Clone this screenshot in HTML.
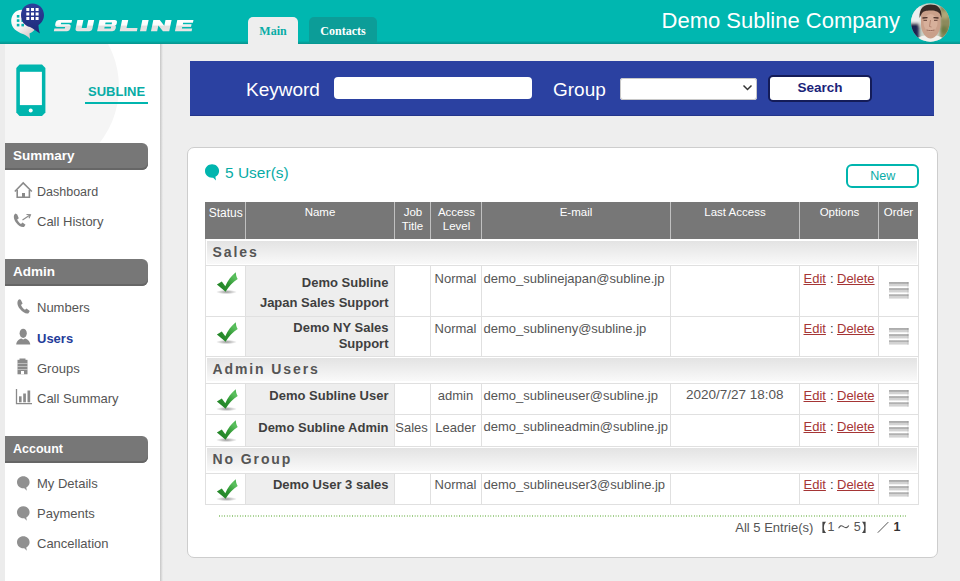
<!DOCTYPE html>
<html><head><meta charset="utf-8"><style>
html,body{margin:0;padding:0;width:960px;height:581px;overflow:hidden;background:#eeeeee;}
body{position:relative;font-family:"Liberation Sans", sans-serif;}
.b{position:absolute;}
.t{position:absolute;white-space:nowrap;}
</style></head><body>
<div class="b" style="left:0px;top:0px;width:960px;height:581px;background:#eeeeee;"></div>
<div class="b" style="left:0px;top:0px;width:960px;height:44px;background:linear-gradient(#00b7b0 0,#00b7b0 41px,#04a6a0 42px,#07948e 44px);"></div>
<svg class="b" style="left:8px;top:0px;" width="42" height="44" viewBox="0 0 42 44">
<defs>
<linearGradient id="wb" x1="0" y1="0" x2="0.6" y2="1"><stop offset="0" stop-color="#ffffff"/><stop offset="0.6" stop-color="#f4f4f4"/><stop offset="1" stop-color="#d9c9c9"/></linearGradient>
<linearGradient id="bb" x1="0" y1="0" x2="0" y2="1"><stop offset="0" stop-color="#2d3f9c"/><stop offset="1" stop-color="#1e2a78"/></linearGradient>
</defs>
<path d="M14 9.8 C7 9.8 3.2 15.5 3.2 21 C3.2 28 9 32 15 34 C18 35 20.5 37 22 39 L21.5 33.5 C25 32 27 30 28 27 Z" fill="url(#wb)"/>
<g fill="#00b5ae"><rect x="8.8" y="15" width="2.6" height="2.6"/><rect x="8.8" y="19.3" width="2.6" height="2.6"/><rect x="8.8" y="23.8" width="2.6" height="2.6"/><rect x="13.4" y="23.8" width="2.6" height="2.6"/><rect x="13.4" y="19.3" width="2.6" height="2.6"/></g>
<path d="M24.5 3.5 C31 3.5 36 8.5 36 15 C36 19.5 33.5 23 30.5 25 C30.5 28 31 31 32 33.5 C28.5 31.5 25 28.5 22 27 C16.5 26 13 21 13 15 C13 8.5 18 3.5 24.5 3.5 Z" fill="url(#bb)"/>
<g fill="#ffffff"><rect x="18.3" y="8" width="3" height="3"/><rect x="23" y="8" width="3" height="3"/><rect x="27.6" y="8" width="3" height="3"/>
<rect x="18.3" y="12.5" width="3" height="3"/><rect x="23" y="12.5" width="3" height="3"/><rect x="27.6" y="12.5" width="3" height="3"/>
<rect x="18.3" y="17" width="3" height="3"/><rect x="23" y="17" width="3" height="3"/><rect x="27.6" y="17" width="3" height="3"/></g>
</svg>
<svg class="b" style="left:50px;top:20.3px;overflow:visible;" width="150" height="11.2" viewBox="0 0 150 11.2"><defs><linearGradient id="lg" x1="0" y1="0" x2="0" y2="1"><stop offset="0" stop-color="#ffffff"/><stop offset="0.45" stop-color="#fbfbfb"/><stop offset="0.55" stop-color="#e0e0e0"/><stop offset="0.9" stop-color="#e6e3e3"/><stop offset="1" stop-color="#f5e4e4"/></linearGradient></defs>
<g fill="url(#lg)" fill-rule="evenodd" transform="matrix(1 0 -0.21 1 2.35 0)"><path transform="translate(3.75 0)" d="M15.9 0 H2.6 Q0 0 0 2.6 V4.35 Q0 6.95 2.6 6.95 H10.4 V8.5 H0 V11.2 H13.3 Q15.9 11.2 15.9 8.6 V6.85 Q15.9 4.25 13.3 4.25 H5.5 V2.7 H15.9 Z"/><path transform="translate(25.00 0)" d="M0 0 H6 V8.1 H10.9 V0 H16.8 V8.4 Q16.8 11.2 14 11.2 H2.8 Q0 11.2 0 8.4 Z"/><path transform="translate(47.10 0)" d="M0 0 H15.2 Q18 0 18 2.6 V3.7 Q18 5.6 16.4 5.6 Q18 5.6 18 7.5 V8.6 Q18 11.2 15.2 11.2 H0 Z M6.6 2.5 V4.3 H13.1 V2.5 Z M6.6 6.7 V8.6 H13.1 V6.7 Z"/><path transform="translate(69.70 0)" d="M0 0 H6.2 V8.1 H17.2 V11.2 H0 Z"/><path transform="translate(90.00 0)" d="M0 0 H6.3 V11.2 H0 Z"/><path transform="translate(101.00 0)" d="M0 11.2 V0 H6.4 L12.2 5.8 V0 H18.3 V11.2 H12 L6.2 5.4 V11.2 Z"/><path transform="translate(125.00 0)" d="M0 0 H16.2 V2.8 H6.4 V4.2 H15.2 V7.1 H6.4 V8.5 H16.7 V11.2 H0 Z"/></g></svg>
<div class="b" style="left:248px;top:17px;width:50px;height:27px;background:#eeeeee;border-radius:5px 5px 0 0;"></div>
<div class="b" style="left:309px;top:17px;width:68px;height:26px;background:#0c9d98;border-radius:5px 5px 0 0;"></div>
<div class="t" style="left:-27px;width:600px;text-align:center;top:24.65px;font-size:12px;line-height:12px;color:#08aca6;font-weight:bold;font-family:'Liberation Serif', serif;">Main</div>
<div class="t" style="left:43px;width:600px;text-align:center;top:24.65px;font-size:12px;line-height:12px;color:#ffffff;font-weight:bold;font-family:'Liberation Serif', serif;">Contacts</div>
<div class="t" style="left:300px;width:600px;text-align:right;top:10.38px;font-size:22px;line-height:22px;color:#ffffff;">Demo Subline Company</div>
<svg class="b" style="left:911px;top:2.5px;" width="39" height="39" viewBox="0 0 39 39">
<defs><clipPath id="av"><circle cx="19.3" cy="19.5" r="19.3"/></clipPath>
<filter id="bl" x="-20%" y="-20%" width="140%" height="140%"><feGaussianBlur stdDeviation="0.7"/></filter>
<filter id="bl2" x="-20%" y="-20%" width="140%" height="140%"><feGaussianBlur stdDeviation="1.6"/></filter></defs>
<g clip-path="url(#av)">
<rect width="39" height="39" fill="#c9cfc3"/>
<g filter="url(#bl2)">
<rect x="-2" y="-2" width="12" height="24" fill="#eef0f0"/>
<rect x="-2" y="20" width="10" height="22" fill="#1c2450"/>
<rect x="29" y="-2" width="12" height="42" fill="#8c8a5c"/>
<circle cx="34" cy="12" r="4" fill="#b0a878"/>
<circle cx="33" cy="27" r="4" fill="#6f7a44"/>
</g>
<g filter="url(#bl)">
<path d="M3 41 C5 34 11 32 19 32 C27 32 34 34 36 41 Z" fill="#f2f0ec"/>
<path d="M10 12 C10 6 14 5 19.5 5 C25 5 29 6 29.5 12 L29.5 22 C29 30 24 35.5 19.5 35.5 C15 35.5 10.5 30 10 22 Z" fill="#caa08a"/>
<ellipse cx="19.5" cy="20" rx="7" ry="9" fill="#d7b09b"/>
<path d="M8.5 15 C8 5 13 1.5 19.5 1.5 C26 1.5 31 4 30.5 15 L29 11 C27 8 23 7.5 19.5 7.5 C15 7.5 12 8 10.5 11 Z" fill="#392a25"/>
<path d="M11.5 15 L16.5 14.6 M22.5 14.6 L27.5 15" stroke="#4a3028" stroke-width="1.3"/>
<path d="M12.5 17.3 H16 M23 17.3 H26.5" stroke="#5a3a30" stroke-width="1"/>
<path d="M19.5 17 L18.5 23.5 L20.5 24" stroke="#a97a66" stroke-width="0.8" fill="none"/>
<path d="M15.5 27 C18 27.8 21 27.8 23.5 27" stroke="#9a6a5a" stroke-width="1" fill="none"/>
</g>
</g></svg>
<div class="b" style="left:0px;top:44px;width:5px;height:537px;background:#ececec;"></div>
<div class="b" style="left:5px;top:44px;width:155px;height:537px;background:#ffffff;overflow:hidden;"></div>
<div class="b" style="left:5px;top:44px;width:154px;height:100px;overflow:hidden;"><div style="position:absolute;left:-66px;top:-47px;width:180px;height:180px;border-radius:50%;background:#f5f5f5;"></div></div>
<div class="b" style="left:160px;top:44px;width:2.5px;height:537px;background:linear-gradient(90deg,#c6c6c6,#e2e2e2 70%,#eeeeee);"></div>
<svg class="b" style="left:16px;top:64px;" width="30" height="53" viewBox="0 0 30 53"><path d="M3.5 0.6 H26 L29.4 4 V48.5 L26 52 H3.5 L0.3 48.5 V4 Z" fill="#00b5ae"/>
<rect x="3.9" y="7.8" width="22" height="33.3" fill="#ffffff"/><circle cx="14.7" cy="46.6" r="2" fill="#ffffff"/></svg>
<div class="t" style="left:88px;top:85.00px;font-size:13px;line-height:13px;color:#08aca6;font-weight:bold;">SUBLINE</div>
<div class="b" style="left:85px;top:102px;width:63px;height:2px;background:#00b5ae;"></div>
<div class="b" style="left:5px;top:143px;width:143px;height:27px;background:#777777;border-radius:0 6px 6px 0;box-shadow:inset 0 -2px 0 #666;"></div>
<div class="t" style="left:13px;top:149.07px;font-size:13.5px;line-height:13.5px;color:#ffffff;font-weight:bold;">Summary</div>
<div class="b" style="left:5px;top:259px;width:143px;height:27px;background:#777777;border-radius:0 6px 6px 0;box-shadow:inset 0 -2px 0 #666;"></div>
<div class="t" style="left:13px;top:265.07px;font-size:13.5px;line-height:13.5px;color:#ffffff;font-weight:bold;">Admin</div>
<div class="b" style="left:5px;top:436px;width:143px;height:27px;background:#777777;border-radius:0 6px 6px 0;box-shadow:inset 0 -2px 0 #666;"></div>
<div class="t" style="left:13px;top:442.92px;font-size:12.5px;line-height:12.5px;color:#ffffff;font-weight:bold;">Account</div>
<svg class="b" style="left:13px;top:181px;" width="21" height="18" viewBox="0 0 21 18"><path d="M1.8 10.5 L10.2 2 L18.8 10.5" fill="none" stroke="#8a8a8a" stroke-width="1.6"/><path d="M4.2 9 V16.2 H16.4 V9" fill="none" stroke="#8a8a8a" stroke-width="1.6"/><rect x="9" y="12" width="3" height="4.5" fill="#8a8a8a"/></svg>
<div class="t" style="left:37px;top:185.62px;font-size:12.5px;line-height:12.5px;color:#555555;">Dashboard</div>
<svg class="b" style="left:13px;top:212px;" width="19" height="17" viewBox="0 0 19 17"><path d="M2.5 1.5 C0 3 0.5 7 3 10.5 C5.5 14 8.5 15.5 11 15 L12.5 12.8 L9.5 10.5 L8 12 C6.5 11.2 4.8 9 4.2 7.5 L5.8 6.2 L4.2 2.5 Z" fill="#8a8a8a"/><path d="M9.5 8 L17 3" stroke="#8a8a8a" stroke-width="1.1"/><path d="M13.5 2.5 L17.5 2.8 L16 6.2" fill="none" stroke="#8a8a8a" stroke-width="1.1"/></svg>
<div class="t" style="left:37px;top:215.40px;font-size:13px;line-height:13px;color:#555555;">Call History</div>
<svg class="b" style="left:16px;top:298px;" width="15" height="17" viewBox="0 0 15 17"><path d="M3.2 1.2 C0.5 3 1 7.5 4 11 C7 14.5 10 16 12.5 15.2 L13.8 13 L10.5 10.5 L9 11.8 C7.5 11 5.5 8.5 5 7 L6.6 5.6 L4.8 1.8 Z" fill="#8a8a8a"/></svg>
<div class="t" style="left:37px;top:301.30px;font-size:13px;line-height:13px;color:#555555;">Numbers</div>
<svg class="b" style="left:15px;top:328px;" width="17" height="18" viewBox="0 0 17 18"><ellipse cx="8.2" cy="5.3" rx="3.6" ry="4.6" fill="#8a8a8a"/><path d="M1.2 16.6 C1.5 13 4 11.3 6.3 10.5 L8.2 11.5 L10.1 10.5 C12.4 11.3 15 13 15.3 16.6 Z" fill="#8a8a8a"/></svg>
<div class="t" style="left:37px;top:331.60px;font-size:13px;line-height:13px;color:#1f3c9a;font-weight:bold;">Users</div>
<svg class="b" style="left:16px;top:358px;" width="13" height="17" viewBox="0 0 13 17"><rect x="1.5" y="1.8" width="10" height="14.5" fill="#8a8a8a"/><rect x="3.5" y="0.5" width="6" height="2" fill="#8a8a8a"/><g fill="#ffffff" opacity="0.55"><rect x="1.5" y="5" width="10" height="0.8"/><rect x="1.5" y="8" width="10" height="0.8"/><rect x="1.5" y="11" width="10" height="0.8"/></g><rect x="5" y="13" width="3" height="3.3" fill="#ffffff"/></svg>
<div class="t" style="left:37px;top:361.50px;font-size:13px;line-height:13px;color:#555555;">Groups</div>
<svg class="b" style="left:15px;top:388px;" width="18" height="18" viewBox="0 0 18 18"><path d="M1.5 1 V15.7 H17" fill="none" stroke="#8a8a8a" stroke-width="1.3"/><rect x="4" y="8.3" width="2.6" height="6" fill="#8a8a8a"/><rect x="8.2" y="5.5" width="2.7" height="8.8" fill="#8a8a8a"/><rect x="12.5" y="2.5" width="2.7" height="11.8" fill="#8a8a8a"/></svg>
<div class="t" style="left:37px;top:391.50px;font-size:13px;line-height:13px;color:#555555;">Call Summary</div>
<svg class="b" style="left:17px;top:476px" width="14.0" height="16.0" viewBox="0 0 14 16"><path d="M6.3 0.3 C9.8 0.3 12.6 2.9 12.6 6.2 C12.6 8.5 11.3 10.4 9.3 11.4 L9.8 14.8 L7.3 12.2 C7 12.2 6.6 12.2 6.3 12.2 C2.8 12.2 0 9.6 0 6.2 C0 2.9 2.8 0.3 6.3 0.3 Z" fill="#909090"/></svg>
<div class="t" style="left:37px;top:477.00px;font-size:13px;line-height:13px;color:#555555;">My Details</div>
<svg class="b" style="left:17px;top:506px" width="14.0" height="16.0" viewBox="0 0 14 16"><path d="M6.3 0.3 C9.8 0.3 12.6 2.9 12.6 6.2 C12.6 8.5 11.3 10.4 9.3 11.4 L9.8 14.8 L7.3 12.2 C7 12.2 6.6 12.2 6.3 12.2 C2.8 12.2 0 9.6 0 6.2 C0 2.9 2.8 0.3 6.3 0.3 Z" fill="#909090"/></svg>
<div class="t" style="left:37px;top:507.30px;font-size:13px;line-height:13px;color:#555555;">Payments</div>
<svg class="b" style="left:17px;top:536px" width="14.0" height="16.0" viewBox="0 0 14 16"><path d="M6.3 0.3 C9.8 0.3 12.6 2.9 12.6 6.2 C12.6 8.5 11.3 10.4 9.3 11.4 L9.8 14.8 L7.3 12.2 C7 12.2 6.6 12.2 6.3 12.2 C2.8 12.2 0 9.6 0 6.2 C0 2.9 2.8 0.3 6.3 0.3 Z" fill="#909090"/></svg>
<div class="t" style="left:37px;top:537.00px;font-size:13px;line-height:13px;color:#555555;">Cancellation</div>
<div class="b" style="left:190px;top:61px;width:744px;height:55px;background:#2b41a1;box-shadow:inset 0 -1px 0 #23358a;"></div>
<div class="t" style="left:246px;top:79.72px;font-size:19px;line-height:19px;color:#ffffff;">Keyword</div>
<div class="b" style="left:334px;top:77px;width:198px;height:22px;background:#ffffff;border-radius:4px;"></div>
<div class="t" style="left:553px;top:79.72px;font-size:19px;line-height:19px;color:#ffffff;">Group</div>
<div class="b" style="left:620px;top:77.5px;width:137px;height:22px;background:#ffffff;border-radius:3px;box-shadow:inset 0 0 0 1px #c8c8c8;"></div>
<svg class="b" style="left:742px;top:84px;" width="12" height="8" viewBox="0 0 12 8"><path d="M1.5 1.5 L5.5 5.5 L9.5 1.5" fill="none" stroke="#333" stroke-width="1.5"/></svg>
<div class="b" style="left:768px;top:74.5px;width:104px;height:27px;background:#ffffff;border:2px solid #141c58;border-radius:5px;box-sizing:border-box;"></div>
<div class="t" style="left:520px;width:600px;text-align:center;top:81.07px;font-size:13.5px;line-height:13.5px;color:#1a237a;font-weight:bold;">Search</div>
<div class="b" style="left:187px;top:146.5px;width:751px;height:411px;background:#ffffff;border:1.5px solid #cdcdcd;border-radius:7px;box-sizing:border-box;"></div>
<svg class="b" style="left:204.8px;top:164.4px" width="15.680000000000001" height="17.92" viewBox="0 0 14 16"><path d="M6.3 0.3 C9.8 0.3 12.6 2.9 12.6 6.2 C12.6 8.5 11.3 10.4 9.3 11.4 L9.8 14.8 L7.3 12.2 C7 12.2 6.6 12.2 6.3 12.2 C2.8 12.2 0 9.6 0 6.2 C0 2.9 2.8 0.3 6.3 0.3 Z" fill="#00b5ae"/></svg>
<div class="t" style="left:225px;top:165.18px;font-size:15.5px;line-height:15.5px;color:#08aca6;">5 User(s)</div>
<div class="b" style="left:846px;top:164px;width:73px;height:23.5px;border:2px solid #00b5ae;border-radius:6px;box-sizing:border-box;background:#fff;"></div>
<div class="t" style="left:582.8px;width:600px;text-align:center;top:170.02px;font-size:12.5px;line-height:12.5px;color:#08aca6;">New</div>
<div class="b" style="left:205px;top:202px;width:713px;height:37px;background:#777777;"></div>
<div class="b" style="left:244.5px;top:202px;width:1.5px;height:37px;background:#c0c0c0;"></div>
<div class="b" style="left:393.5px;top:202px;width:1.5px;height:37px;background:#c0c0c0;"></div>
<div class="b" style="left:429.5px;top:202px;width:1.5px;height:37px;background:#c0c0c0;"></div>
<div class="b" style="left:480.5px;top:202px;width:1.5px;height:37px;background:#c0c0c0;"></div>
<div class="b" style="left:669.5px;top:202px;width:1.5px;height:37px;background:#c0c0c0;"></div>
<div class="b" style="left:798.5px;top:202px;width:1.5px;height:37px;background:#c0c0c0;"></div>
<div class="b" style="left:877.5px;top:202px;width:1.5px;height:37px;background:#c0c0c0;"></div>
<div class="t" style="left:-74.30000000000001px;width:600px;text-align:center;top:206.84px;font-size:12px;line-height:12px;color:#ffffff;">Status</div>
<div class="t" style="left:20px;width:600px;text-align:center;top:207.27px;font-size:11.5px;line-height:11.5px;color:#ffffff;">Name</div>
<div class="t" style="left:113px;width:600px;text-align:center;top:207.27px;font-size:11.5px;line-height:11.5px;color:#ffffff;">Job</div>
<div class="t" style="left:112.5px;width:600px;text-align:center;top:221.47px;font-size:11.5px;line-height:11.5px;color:#ffffff;">Title</div>
<div class="t" style="left:156.5px;width:600px;text-align:center;top:207.27px;font-size:11.5px;line-height:11.5px;color:#ffffff;">Access</div>
<div class="t" style="left:156.5px;width:600px;text-align:center;top:221.47px;font-size:11.5px;line-height:11.5px;color:#ffffff;">Level</div>
<div class="t" style="left:276px;width:600px;text-align:center;top:207.27px;font-size:11.5px;line-height:11.5px;color:#ffffff;">E-mail</div>
<div class="t" style="left:435px;width:600px;text-align:center;top:207.27px;font-size:11.5px;line-height:11.5px;color:#ffffff;">Last Access</div>
<div class="t" style="left:539.5px;width:600px;text-align:center;top:207.27px;font-size:11.5px;line-height:11.5px;color:#ffffff;">Options</div>
<div class="t" style="left:598.5px;width:600px;text-align:center;top:207.27px;font-size:11.5px;line-height:11.5px;color:#ffffff;">Order</div>
<div class="b" style="left:205px;top:239px;width:714px;height:26px;background:#ffffff;"></div>
<div class="b" style="left:205px;top:239px;width:1px;height:26px;background:#e2e2e2;"></div>
<div class="b" style="left:918px;top:239px;width:1px;height:26px;background:#e2e2e2;"></div>
<div class="b" style="left:207px;top:241px;width:710px;height:23px;background:linear-gradient(#e3e3e3,#f9f9f9);"></div>
<div class="b" style="left:205px;top:265px;width:714px;height:1px;background:#e0e0e0;"></div>
<div class="t" style="left:212.5px;top:244.55px;font-size:14px;line-height:14px;color:#555555;font-weight:bold;letter-spacing:1.9px;">Sales</div>
<div class="b" style="left:205px;top:266px;width:714px;height:50px;background:#ffffff;"></div>
<div class="b" style="left:246px;top:266px;width:148px;height:50px;background:#eeeeee;"></div>
<div class="b" style="left:205px;top:316px;width:714px;height:1px;background:#e0e0e0;"></div>
<div class="b" style="left:205px;top:266px;width:1px;height:51px;background:#e0e0e0;"></div>
<div class="b" style="left:245px;top:266px;width:1px;height:51px;background:#e0e0e0;"></div>
<div class="b" style="left:394px;top:266px;width:1px;height:51px;background:#e0e0e0;"></div>
<div class="b" style="left:430px;top:266px;width:1px;height:51px;background:#e0e0e0;"></div>
<div class="b" style="left:481px;top:266px;width:1px;height:51px;background:#e0e0e0;"></div>
<div class="b" style="left:670px;top:266px;width:1px;height:51px;background:#e0e0e0;"></div>
<div class="b" style="left:799px;top:266px;width:1px;height:51px;background:#e0e0e0;"></div>
<div class="b" style="left:878px;top:266px;width:1px;height:51px;background:#e0e0e0;"></div>
<div class="b" style="left:918px;top:266px;width:1px;height:51px;background:#e0e0e0;"></div>
<svg class="b" style="left:212px;top:268px" width="30" height="30" viewBox="0 0 30 30">
<defs><linearGradient id="cg268" x1="0" y1="1" x2="1" y2="0"><stop offset="0" stop-color="#1f7d24"/><stop offset="0.45" stop-color="#2b922f"/><stop offset="0.8" stop-color="#5cc15f"/><stop offset="1" stop-color="#3fae44"/></linearGradient>
<radialGradient id="sh268"><stop offset="0" stop-color="#000" stop-opacity="0.4"/><stop offset="1" stop-color="#000" stop-opacity="0"/></radialGradient></defs>
<ellipse cx="14.5" cy="24" rx="10.5" ry="2.2" fill="url(#sh268)"/>
<path d="M4.9 16.6 L9.8 13.6 L13.3 18.3 C15.6 12.8 19.2 7.8 23.8 4.3 C23.9 7 24.5 9.3 25.7 11.1 C21 14.2 16.6 18.6 13.6 23.7 Z" fill="url(#cg268)"/>
</svg>
<div class="t" style="left:-211.5px;width:600px;text-align:right;top:276.00px;font-size:13px;line-height:13px;color:#3f3f3f;font-weight:bold;">Demo Subline</div>
<div class="t" style="left:-211.5px;width:600px;text-align:right;top:296.20px;font-size:13px;line-height:13px;color:#3f3f3f;font-weight:bold;">Japan Sales Support</div>
<div class="t" style="left:155.5px;width:600px;text-align:center;top:271.50px;font-size:13px;line-height:13px;color:#555555;">Normal</div>
<div class="t" style="left:483.5px;top:271.50px;font-size:13px;line-height:13px;color:#555555;">demo_sublinejapan@subline.jp</div>
<div class="t" style="left:803.5px;top:271.50px;font-size:13px;line-height:13px;color:#a53535;"><u>Edit</u></div>
<div class="t" style="left:830px;top:271.50px;font-size:13px;line-height:13px;color:#333333;">:</div>
<div class="t" style="left:837px;top:271.50px;font-size:13px;line-height:13px;color:#a53535;"><u>Delete</u></div>
<svg class="b" style="left:889px;top:282px" width="20" height="17" viewBox="0 0 20 17">
<defs><linearGradient id="og282" x1="0" y1="0" x2="0" y2="1"><stop offset="0" stop-color="#a9a9a9"/><stop offset="0.4" stop-color="#b4b4b4"/><stop offset="0.5" stop-color="#d2d2d2"/><stop offset="1" stop-color="#d4d4d4"/></linearGradient></defs>
<rect x="0" y="0" width="19.7" height="4.3" fill="url(#og282)"/><rect x="0" y="6.15" width="19.7" height="4.3" fill="url(#og282)"/><rect x="0" y="12.3" width="19.7" height="4.3" fill="url(#og282)"/>
<rect x="18.2" y="0" width="1.5" height="17" fill="#000" opacity="0.06"/>
</svg>
<div class="b" style="left:205px;top:317px;width:714px;height:39px;background:#ffffff;"></div>
<div class="b" style="left:246px;top:317px;width:148px;height:39px;background:#eeeeee;"></div>
<div class="b" style="left:205px;top:356px;width:714px;height:1px;background:#e0e0e0;"></div>
<div class="b" style="left:205px;top:317px;width:1px;height:40px;background:#e0e0e0;"></div>
<div class="b" style="left:245px;top:317px;width:1px;height:40px;background:#e0e0e0;"></div>
<div class="b" style="left:394px;top:317px;width:1px;height:40px;background:#e0e0e0;"></div>
<div class="b" style="left:430px;top:317px;width:1px;height:40px;background:#e0e0e0;"></div>
<div class="b" style="left:481px;top:317px;width:1px;height:40px;background:#e0e0e0;"></div>
<div class="b" style="left:670px;top:317px;width:1px;height:40px;background:#e0e0e0;"></div>
<div class="b" style="left:799px;top:317px;width:1px;height:40px;background:#e0e0e0;"></div>
<div class="b" style="left:878px;top:317px;width:1px;height:40px;background:#e0e0e0;"></div>
<div class="b" style="left:918px;top:317px;width:1px;height:40px;background:#e0e0e0;"></div>
<svg class="b" style="left:212px;top:318px" width="30" height="30" viewBox="0 0 30 30">
<defs><linearGradient id="cg318" x1="0" y1="1" x2="1" y2="0"><stop offset="0" stop-color="#1f7d24"/><stop offset="0.45" stop-color="#2b922f"/><stop offset="0.8" stop-color="#5cc15f"/><stop offset="1" stop-color="#3fae44"/></linearGradient>
<radialGradient id="sh318"><stop offset="0" stop-color="#000" stop-opacity="0.4"/><stop offset="1" stop-color="#000" stop-opacity="0"/></radialGradient></defs>
<ellipse cx="14.5" cy="24" rx="10.5" ry="2.2" fill="url(#sh318)"/>
<path d="M4.9 16.6 L9.8 13.6 L13.3 18.3 C15.6 12.8 19.2 7.8 23.8 4.3 C23.9 7 24.5 9.3 25.7 11.1 C21 14.2 16.6 18.6 13.6 23.7 Z" fill="url(#cg318)"/>
</svg>
<div class="t" style="left:-211.5px;width:600px;text-align:right;top:321.00px;font-size:13px;line-height:13px;color:#3f3f3f;font-weight:bold;">Demo NY Sales</div>
<div class="t" style="left:-211.5px;width:600px;text-align:right;top:336.50px;font-size:13px;line-height:13px;color:#3f3f3f;font-weight:bold;">Support</div>
<div class="t" style="left:155.5px;width:600px;text-align:center;top:322.00px;font-size:13px;line-height:13px;color:#555555;">Normal</div>
<div class="t" style="left:483.5px;top:321.70px;font-size:13px;line-height:13px;color:#555555;">demo_sublineny@subline.jp</div>
<div class="t" style="left:803.5px;top:321.70px;font-size:13px;line-height:13px;color:#a53535;"><u>Edit</u></div>
<div class="t" style="left:830px;top:321.70px;font-size:13px;line-height:13px;color:#333333;">:</div>
<div class="t" style="left:837px;top:321.70px;font-size:13px;line-height:13px;color:#a53535;"><u>Delete</u></div>
<svg class="b" style="left:889px;top:327.8px" width="20" height="17" viewBox="0 0 20 17">
<defs><linearGradient id="og327.8" x1="0" y1="0" x2="0" y2="1"><stop offset="0" stop-color="#a9a9a9"/><stop offset="0.4" stop-color="#b4b4b4"/><stop offset="0.5" stop-color="#d2d2d2"/><stop offset="1" stop-color="#d4d4d4"/></linearGradient></defs>
<rect x="0" y="0" width="19.7" height="4.3" fill="url(#og327.8)"/><rect x="0" y="6.15" width="19.7" height="4.3" fill="url(#og327.8)"/><rect x="0" y="12.3" width="19.7" height="4.3" fill="url(#og327.8)"/>
<rect x="18.2" y="0" width="1.5" height="17" fill="#000" opacity="0.06"/>
</svg>
<div class="b" style="left:205px;top:357px;width:714px;height:26px;background:#ffffff;"></div>
<div class="b" style="left:205px;top:357px;width:1px;height:26px;background:#e2e2e2;"></div>
<div class="b" style="left:918px;top:357px;width:1px;height:26px;background:#e2e2e2;"></div>
<div class="b" style="left:207px;top:358px;width:710px;height:23px;background:linear-gradient(#e3e3e3,#f9f9f9);"></div>
<div class="b" style="left:205px;top:383px;width:714px;height:1px;background:#e0e0e0;"></div>
<div class="t" style="left:212.5px;top:361.90px;font-size:14px;line-height:14px;color:#555555;font-weight:bold;letter-spacing:1.9px;">Admin Users</div>
<div class="b" style="left:205px;top:384px;width:714px;height:30px;background:#ffffff;"></div>
<div class="b" style="left:246px;top:384px;width:148px;height:30px;background:#eeeeee;"></div>
<div class="b" style="left:205px;top:414px;width:714px;height:1px;background:#e0e0e0;"></div>
<div class="b" style="left:205px;top:384px;width:1px;height:31px;background:#e0e0e0;"></div>
<div class="b" style="left:245px;top:384px;width:1px;height:31px;background:#e0e0e0;"></div>
<div class="b" style="left:394px;top:384px;width:1px;height:31px;background:#e0e0e0;"></div>
<div class="b" style="left:430px;top:384px;width:1px;height:31px;background:#e0e0e0;"></div>
<div class="b" style="left:481px;top:384px;width:1px;height:31px;background:#e0e0e0;"></div>
<div class="b" style="left:670px;top:384px;width:1px;height:31px;background:#e0e0e0;"></div>
<div class="b" style="left:799px;top:384px;width:1px;height:31px;background:#e0e0e0;"></div>
<div class="b" style="left:878px;top:384px;width:1px;height:31px;background:#e0e0e0;"></div>
<div class="b" style="left:918px;top:384px;width:1px;height:31px;background:#e0e0e0;"></div>
<svg class="b" style="left:212px;top:385px" width="30" height="30" viewBox="0 0 30 30">
<defs><linearGradient id="cg385" x1="0" y1="1" x2="1" y2="0"><stop offset="0" stop-color="#1f7d24"/><stop offset="0.45" stop-color="#2b922f"/><stop offset="0.8" stop-color="#5cc15f"/><stop offset="1" stop-color="#3fae44"/></linearGradient>
<radialGradient id="sh385"><stop offset="0" stop-color="#000" stop-opacity="0.4"/><stop offset="1" stop-color="#000" stop-opacity="0"/></radialGradient></defs>
<ellipse cx="14.5" cy="24" rx="10.5" ry="2.2" fill="url(#sh385)"/>
<path d="M4.9 16.6 L9.8 13.6 L13.3 18.3 C15.6 12.8 19.2 7.8 23.8 4.3 C23.9 7 24.5 9.3 25.7 11.1 C21 14.2 16.6 18.6 13.6 23.7 Z" fill="url(#cg385)"/>
</svg>
<div class="t" style="left:-211.5px;width:600px;text-align:right;top:388.70px;font-size:13px;line-height:13px;color:#3f3f3f;font-weight:bold;">Demo Subline User</div>
<div class="t" style="left:155.5px;width:600px;text-align:center;top:388.70px;font-size:13px;line-height:13px;color:#555555;">admin</div>
<div class="t" style="left:483.5px;top:388.50px;font-size:13px;line-height:13px;color:#555555;">demo_sublineuser@subline.jp</div>
<div class="t" style="left:434.79999999999995px;width:600px;text-align:center;top:388.07px;font-size:13.5px;line-height:13.5px;color:#555555;">2020/7/27 18:08</div>
<div class="t" style="left:803.5px;top:388.50px;font-size:13px;line-height:13px;color:#a53535;"><u>Edit</u></div>
<div class="t" style="left:830px;top:388.50px;font-size:13px;line-height:13px;color:#333333;">:</div>
<div class="t" style="left:837px;top:388.50px;font-size:13px;line-height:13px;color:#a53535;"><u>Delete</u></div>
<svg class="b" style="left:889px;top:389.8px" width="20" height="17" viewBox="0 0 20 17">
<defs><linearGradient id="og389.8" x1="0" y1="0" x2="0" y2="1"><stop offset="0" stop-color="#a9a9a9"/><stop offset="0.4" stop-color="#b4b4b4"/><stop offset="0.5" stop-color="#d2d2d2"/><stop offset="1" stop-color="#d4d4d4"/></linearGradient></defs>
<rect x="0" y="0" width="19.7" height="4.3" fill="url(#og389.8)"/><rect x="0" y="6.15" width="19.7" height="4.3" fill="url(#og389.8)"/><rect x="0" y="12.3" width="19.7" height="4.3" fill="url(#og389.8)"/>
<rect x="18.2" y="0" width="1.5" height="17" fill="#000" opacity="0.06"/>
</svg>
<div class="b" style="left:205px;top:415px;width:714px;height:31px;background:#ffffff;"></div>
<div class="b" style="left:246px;top:415px;width:148px;height:31px;background:#eeeeee;"></div>
<div class="b" style="left:205px;top:446px;width:714px;height:1px;background:#e0e0e0;"></div>
<div class="b" style="left:205px;top:415px;width:1px;height:32px;background:#e0e0e0;"></div>
<div class="b" style="left:245px;top:415px;width:1px;height:32px;background:#e0e0e0;"></div>
<div class="b" style="left:394px;top:415px;width:1px;height:32px;background:#e0e0e0;"></div>
<div class="b" style="left:430px;top:415px;width:1px;height:32px;background:#e0e0e0;"></div>
<div class="b" style="left:481px;top:415px;width:1px;height:32px;background:#e0e0e0;"></div>
<div class="b" style="left:670px;top:415px;width:1px;height:32px;background:#e0e0e0;"></div>
<div class="b" style="left:799px;top:415px;width:1px;height:32px;background:#e0e0e0;"></div>
<div class="b" style="left:878px;top:415px;width:1px;height:32px;background:#e0e0e0;"></div>
<div class="b" style="left:918px;top:415px;width:1px;height:32px;background:#e0e0e0;"></div>
<svg class="b" style="left:212px;top:416px" width="30" height="30" viewBox="0 0 30 30">
<defs><linearGradient id="cg416" x1="0" y1="1" x2="1" y2="0"><stop offset="0" stop-color="#1f7d24"/><stop offset="0.45" stop-color="#2b922f"/><stop offset="0.8" stop-color="#5cc15f"/><stop offset="1" stop-color="#3fae44"/></linearGradient>
<radialGradient id="sh416"><stop offset="0" stop-color="#000" stop-opacity="0.4"/><stop offset="1" stop-color="#000" stop-opacity="0"/></radialGradient></defs>
<ellipse cx="14.5" cy="24" rx="10.5" ry="2.2" fill="url(#sh416)"/>
<path d="M4.9 16.6 L9.8 13.6 L13.3 18.3 C15.6 12.8 19.2 7.8 23.8 4.3 C23.9 7 24.5 9.3 25.7 11.1 C21 14.2 16.6 18.6 13.6 23.7 Z" fill="url(#cg416)"/>
</svg>
<div class="t" style="left:-211.5px;width:600px;text-align:right;top:420.60px;font-size:13px;line-height:13px;color:#3f3f3f;font-weight:bold;">Demo Subline Admin</div>
<div class="t" style="left:111.5px;width:600px;text-align:center;top:420.60px;font-size:13px;line-height:13px;color:#555555;">Sales</div>
<div class="t" style="left:155.5px;width:600px;text-align:center;top:420.60px;font-size:13px;line-height:13px;color:#555555;">Leader</div>
<div class="t" style="left:483.5px;top:420.40px;font-size:13px;line-height:13px;color:#555555;">demo_sublineadmin@subline.jp</div>
<div class="t" style="left:803.5px;top:420.40px;font-size:13px;line-height:13px;color:#a53535;"><u>Edit</u></div>
<div class="t" style="left:830px;top:420.40px;font-size:13px;line-height:13px;color:#333333;">:</div>
<div class="t" style="left:837px;top:420.40px;font-size:13px;line-height:13px;color:#a53535;"><u>Delete</u></div>
<svg class="b" style="left:889px;top:421px" width="20" height="17" viewBox="0 0 20 17">
<defs><linearGradient id="og421" x1="0" y1="0" x2="0" y2="1"><stop offset="0" stop-color="#a9a9a9"/><stop offset="0.4" stop-color="#b4b4b4"/><stop offset="0.5" stop-color="#d2d2d2"/><stop offset="1" stop-color="#d4d4d4"/></linearGradient></defs>
<rect x="0" y="0" width="19.7" height="4.3" fill="url(#og421)"/><rect x="0" y="6.15" width="19.7" height="4.3" fill="url(#og421)"/><rect x="0" y="12.3" width="19.7" height="4.3" fill="url(#og421)"/>
<rect x="18.2" y="0" width="1.5" height="17" fill="#000" opacity="0.06"/>
</svg>
<div class="b" style="left:205px;top:447px;width:714px;height:26px;background:#ffffff;"></div>
<div class="b" style="left:205px;top:447px;width:1px;height:26px;background:#e2e2e2;"></div>
<div class="b" style="left:918px;top:447px;width:1px;height:26px;background:#e2e2e2;"></div>
<div class="b" style="left:207px;top:448px;width:710px;height:23px;background:linear-gradient(#e3e3e3,#f9f9f9);"></div>
<div class="b" style="left:205px;top:473px;width:714px;height:1px;background:#e0e0e0;"></div>
<div class="t" style="left:212.5px;top:451.85px;font-size:14px;line-height:14px;color:#555555;font-weight:bold;letter-spacing:1.9px;">No Group</div>
<div class="b" style="left:205px;top:474px;width:714px;height:30px;background:#ffffff;"></div>
<div class="b" style="left:246px;top:474px;width:148px;height:30px;background:#eeeeee;"></div>
<div class="b" style="left:205px;top:504px;width:714px;height:1px;background:#e0e0e0;"></div>
<div class="b" style="left:205px;top:474px;width:1px;height:31px;background:#e0e0e0;"></div>
<div class="b" style="left:245px;top:474px;width:1px;height:31px;background:#e0e0e0;"></div>
<div class="b" style="left:394px;top:474px;width:1px;height:31px;background:#e0e0e0;"></div>
<div class="b" style="left:430px;top:474px;width:1px;height:31px;background:#e0e0e0;"></div>
<div class="b" style="left:481px;top:474px;width:1px;height:31px;background:#e0e0e0;"></div>
<div class="b" style="left:670px;top:474px;width:1px;height:31px;background:#e0e0e0;"></div>
<div class="b" style="left:799px;top:474px;width:1px;height:31px;background:#e0e0e0;"></div>
<div class="b" style="left:878px;top:474px;width:1px;height:31px;background:#e0e0e0;"></div>
<div class="b" style="left:918px;top:474px;width:1px;height:31px;background:#e0e0e0;"></div>
<svg class="b" style="left:212px;top:475px" width="30" height="30" viewBox="0 0 30 30">
<defs><linearGradient id="cg475" x1="0" y1="1" x2="1" y2="0"><stop offset="0" stop-color="#1f7d24"/><stop offset="0.45" stop-color="#2b922f"/><stop offset="0.8" stop-color="#5cc15f"/><stop offset="1" stop-color="#3fae44"/></linearGradient>
<radialGradient id="sh475"><stop offset="0" stop-color="#000" stop-opacity="0.4"/><stop offset="1" stop-color="#000" stop-opacity="0"/></radialGradient></defs>
<ellipse cx="14.5" cy="24" rx="10.5" ry="2.2" fill="url(#sh475)"/>
<path d="M4.9 16.6 L9.8 13.6 L13.3 18.3 C15.6 12.8 19.2 7.8 23.8 4.3 C23.9 7 24.5 9.3 25.7 11.1 C21 14.2 16.6 18.6 13.6 23.7 Z" fill="url(#cg475)"/>
</svg>
<div class="t" style="left:-211.5px;width:600px;text-align:right;top:478.00px;font-size:13px;line-height:13px;color:#3f3f3f;font-weight:bold;">Demo User 3 sales</div>
<div class="t" style="left:155.5px;width:600px;text-align:center;top:478.00px;font-size:13px;line-height:13px;color:#555555;">Normal</div>
<div class="t" style="left:483.5px;top:478.00px;font-size:13px;line-height:13px;color:#555555;">demo_sublineuser3@subline.jp</div>
<div class="t" style="left:803.5px;top:478.00px;font-size:13px;line-height:13px;color:#a53535;"><u>Edit</u></div>
<div class="t" style="left:830px;top:478.00px;font-size:13px;line-height:13px;color:#333333;">:</div>
<div class="t" style="left:837px;top:478.00px;font-size:13px;line-height:13px;color:#a53535;"><u>Delete</u></div>
<svg class="b" style="left:889px;top:480px" width="20" height="17" viewBox="0 0 20 17">
<defs><linearGradient id="og480" x1="0" y1="0" x2="0" y2="1"><stop offset="0" stop-color="#a9a9a9"/><stop offset="0.4" stop-color="#b4b4b4"/><stop offset="0.5" stop-color="#d2d2d2"/><stop offset="1" stop-color="#d4d4d4"/></linearGradient></defs>
<rect x="0" y="0" width="19.7" height="4.3" fill="url(#og480)"/><rect x="0" y="6.15" width="19.7" height="4.3" fill="url(#og480)"/><rect x="0" y="12.3" width="19.7" height="4.3" fill="url(#og480)"/>
<rect x="18.2" y="0" width="1.5" height="17" fill="#000" opacity="0.06"/>
</svg>
<div class="b" style="left:218.5px;top:515px;width:687px;height:2px;background-image:linear-gradient(90deg,#9ccb84 0,#9ccb84 1.2px,transparent 1.2px);background-size:2.62px 2px;background-repeat:repeat-x;"></div>
<div class="t" style="left:735.3px;top:520.60px;font-size:13px;line-height:13px;color:#555555;">All 5 Entrie(s)</div>
<svg class="b" style="left:815px;top:516px;" width="90" height="22" viewBox="0 0 90 22"><g fill="#444">
<path d="M7.4 5.8 H11.2 C9.4 7.6 8.9 9.5 8.9 11.4 C8.9 13.3 9.4 15.2 11.2 17.1 H7.4 Z"/>
<path d="M50.6 5.8 H46.9 C48.7 7.6 49.2 9.5 49.2 11.4 C49.2 13.3 48.7 15.2 46.9 17.1 H50.6 Z"/>
</g>
<path d="M23.6 12.2 C24.8 9.6 26.3 9.1 28.4 10.6 C30.5 12.1 32.2 12.2 33.8 9.4" fill="none" stroke="#555" stroke-width="1.1"/>
<path d="M62.8 16.7 L73.3 6.1" stroke="#555" stroke-width="1"/></svg>
<div class="t" style="left:827.6px;top:520.92px;font-size:12.5px;line-height:12.5px;color:#555555;">1</div>
<div class="t" style="left:853.8px;top:520.92px;font-size:12.5px;line-height:12.5px;color:#555555;">5</div>
<div class="t" style="left:893.4px;top:520.92px;font-size:12.5px;line-height:12.5px;color:#333333;font-weight:bold;">1</div>
</body></html>
